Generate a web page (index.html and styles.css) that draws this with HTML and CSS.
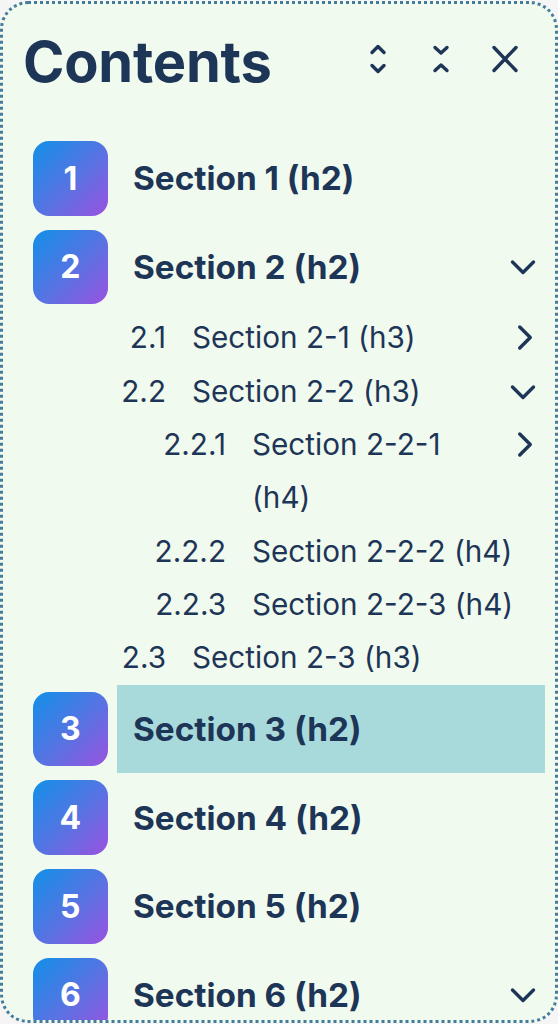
FILE: index.html
```html
<!DOCTYPE html>
<html lang="en">
<head>
<meta charset="utf-8">
<title>Contents</title>
<link rel="stylesheet" href="styles.css">
</head>
<body>
<aside class="toc">
  <div class="toc-head">
    <h2 class="toc-title">Contents</h2>
    <div class="toc-actions">
      <button class="icon-btn" aria-label="Expand all">
        <svg viewBox="0 0 48 48" width="48" height="48"><path d="M18 17.5 L24 11.5 L30 17.5 M18 30.5 L24 36.5 L30 30.5"/></svg>
      </button>
      <button class="icon-btn" aria-label="Collapse all">
        <svg viewBox="0 0 48 48" width="48" height="48"><path d="M18 12.5 L24 18 L30 12.5 M18 35.5 L24 30 L30 35.5"/></svg>
      </button>
      <button class="icon-btn" aria-label="Close">
        <svg viewBox="0 0 48 48" width="48" height="48"><path d="M13 12.5 L35 35.5 M35 12.5 L13 35.5"/></svg>
      </button>
    </div>
  </div>
  <ol class="toc-list">
    <li>
      <div class="toc-row"><span class="badge">1</span><a class="toc-link" href="#s1">Section 1 (h2)</a></div>
    </li>
    <li>
      <div class="toc-row"><span class="badge">2</span><a class="toc-link" href="#s2">Section 2 (h2)</a>
        <button class="toggle" aria-label="Collapse"><svg viewBox="0 0 44 44" width="44" height="44"><path d="M11.5 17 L22 27.5 L32.5 17"/></svg></button>
      </div>
      <ol class="sub-list lvl3">
        <li>
          <div class="sub-row"><span class="num">2.1</span><a class="sub-text" href="#s2-1">Section 2-1 (h3)</a>
            <button class="toggle" aria-label="Expand"><svg viewBox="0 0 44 53" width="44" height="53"><path d="M18.75 16 L29.25 26.5 L18.75 37"/></svg></button>
          </div>
        </li>
        <li>
          <div class="sub-row"><span class="num">2.2</span><a class="sub-text" href="#s2-2">Section 2-2 (h3)</a>
            <button class="toggle" aria-label="Collapse"><svg viewBox="0 0 44 53" width="44" height="53"><path d="M11.5 22 L22 32.5 L32.5 22"/></svg></button>
          </div>
          <ol class="sub-list lvl4">
            <li>
              <div class="sub-row"><span class="num">2.2.1</span><a class="sub-text" href="#s2-2-1">Section 2-2-1 (h4)</a>
                <button class="toggle" aria-label="Expand"><svg viewBox="0 0 44 53" width="44" height="53"><path d="M18.75 16 L29.25 26.5 L18.75 37"/></svg></button>
              </div>
            </li>
            <li>
              <div class="sub-row"><span class="num">2.2.2</span><a class="sub-text" href="#s2-2-2">Section 2-2-2 (h4)</a></div>
            </li>
            <li>
              <div class="sub-row"><span class="num">2.2.3</span><a class="sub-text" href="#s2-2-3">Section 2-2-3 (h4)</a></div>
            </li>
          </ol>
        </li>
        <li>
          <div class="sub-row"><span class="num">2.3</span><a class="sub-text" href="#s2-3">Section 2-3 (h3)</a></div>
        </li>
      </ol>
    </li>
    <li>
      <div class="toc-row"><span class="badge">3</span><a class="toc-link active" href="#s3">Section 3 (h2)</a></div>
    </li>
    <li>
      <div class="toc-row"><span class="badge">4</span><a class="toc-link" href="#s4">Section 4 (h2)</a></div>
    </li>
    <li>
      <div class="toc-row"><span class="badge">5</span><a class="toc-link" href="#s5">Section 5 (h2)</a></div>
    </li>
    <li>
      <div class="toc-row"><span class="badge">6</span><a class="toc-link" href="#s6">Section 6 (h2)</a>
        <button class="toggle" aria-label="Expand"><svg viewBox="0 0 44 44" width="44" height="44"><path d="M11.5 17 L22 27.5 L32.5 17"/></svg></button>
      </div>
    </li>
  </ol>
</aside>
</body>
</html>
```

FILE: styles.css
```css
html, body {
  margin: 0;
  padding: 0;
}

body {
  background: #f5f5f5;
  font-family: Inter, "Noto Sans", "Liberation Sans", sans-serif;
  color: #1d3557;
}

.toc {
  box-sizing: border-box;
  height: 1022px;
  margin-top: 1px;
  border: 3px dotted #457b9d;
  border-radius: 28px;
  background: #f1faee;
  padding: 24px 10px 0 20px;
  overflow: hidden;
}

.toc-head {
  display: flex;
  align-items: center;
  justify-content: space-between;
  height: 68px;
  margin-bottom: 38px;
}

.toc-title {
  margin: 0;
  font-size: 56px;
  line-height: 68px;
  font-weight: 700;
  letter-spacing: -0.2px;
}

.toc-actions {
  display: flex;
  gap: 15.5px;
  margin-right: 16.5px;
  padding-bottom: 6px;
}

.icon-btn,
.toggle {
  padding: 0;
  border: 0;
  background: none;
  color: #1d3557;
  display: flex;
  align-items: center;
  justify-content: center;
  flex-shrink: 0;
  cursor: pointer;
}

.icon-btn {
  width: 48px;
  height: 48px;
}

.icon-btn svg path,
.toggle svg path {
  fill: none;
  stroke: currentColor;
  stroke-width: 3.4;
  stroke-linecap: round;
  stroke-linejoin: round;
}

.toc-list {
  list-style: none;
  margin: 0;
  padding: 0 0 0 10px;
}

.toc-row {
  display: flex;
  align-items: center;
  height: 88.67px;
}

.badge {
  flex-shrink: 0;
  width: 74.67px;
  height: 74.67px;
  margin-right: 9.33px;
  border-radius: 16px;
  background: linear-gradient(135deg, #1190e8 0%, #5a72e2 55%, #9a52e0 100%);
  color: #fff;
  font-size: 32px;
  font-weight: 700;
  display: flex;
  align-items: center;
  justify-content: center;
}

.toc-link {
  flex: 1;
  align-self: stretch;
  display: flex;
  align-items: center;
  padding-left: 16px;
  font-size: 33.33px;
  font-weight: 700;
  color: inherit;
  text-decoration: none;
}

.toc-link.active {
  background: #a8dadc;
}

.toc-row .toggle {
  width: 44px;
  height: 44px;
}

.sub-list {
  list-style: none;
  margin: 0 0 0 84px;
  padding: 0;
}

.sub-list.lvl4 {
  margin-left: 29px;
}

.sub-row {
  display: flex;
  align-items: flex-start;
  font-size: 29.7px;
  line-height: 53.33px;
}

.num {
  flex-shrink: 0;
  width: 49px;
  margin-right: 26px;
  text-align: right;
}

.lvl4 .num {
  width: 80px;
}

.sub-text {
  flex: 1;
  color: inherit;
  text-decoration: none;
}

.sub-row .toggle {
  width: 44px;
  height: 53.33px;
}
```
